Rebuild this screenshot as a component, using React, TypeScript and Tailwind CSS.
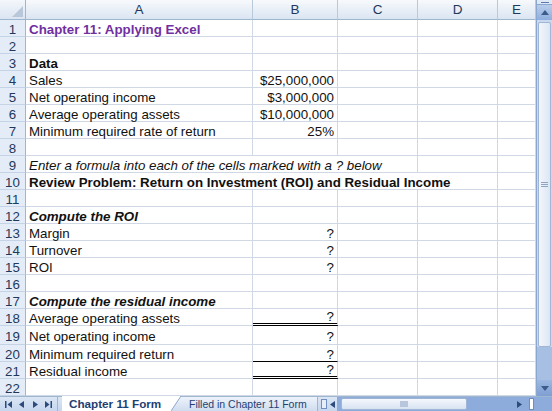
import React from "react";

type Row = {
  n: number;
  a?: string;
  b?: string;
  kind?: "title" | "bold" | "italic" | "bolditalic";
  span?: number;
  h?: number;
  under?: "single" | "double";
};

const COLS = [
  { key: "A", w: 227 },
  { key: "B", w: 85 },
  { key: "C", w: 80 },
  { key: "D", w: 80 },
  { key: "E", w: 38 },
];

const ROWS: Row[] = [
  { n: 1, a: "Chapter 11: Applying Excel", kind: "title" },
  { n: 2 },
  { n: 3, a: "Data", kind: "bold" },
  { n: 4, a: "Sales", b: "$25,000,000" },
  { n: 5, a: "Net operating income", b: "$3,000,000" },
  { n: 6, a: "Average operating assets", b: "$10,000,000" },
  { n: 7, a: "Minimum required rate of return", b: "25%" },
  { n: 8 },
  { n: 9, a: "Enter a formula into each of the cells marked with a ? below", kind: "italic", span: 3 },
  { n: 10, a: "Review Problem: Return on Investment (ROI) and Residual Income", kind: "bold", span: 4 },
  { n: 11 },
  { n: 12, a: "Compute the ROI", kind: "bolditalic" },
  { n: 13, a: "Margin", b: "?" },
  { n: 14, a: "Turnover", b: "?" },
  { n: 15, a: "ROI", b: "?" },
  { n: 16 },
  { n: 17, a: "Compute the residual income", kind: "bolditalic" },
  { n: 18, a: "Average operating assets", b: "?", under: "double" },
  { n: 19, a: "Net operating income", b: "?", h: 19 },
  { n: 20, a: "Minimum required return", b: "?", under: "single" },
  { n: 21, a: "Residual income", b: "?", under: "double" },
  { n: 22 },
];

const textClass = (kind?: Row["kind"]) => {
  switch (kind) {
    case "title":
      return "font-bold text-[#7030a0]";
    case "bold":
      return "font-bold text-[#111]";
    case "italic":
      return "italic text-[#111]";
    case "bolditalic":
      return "font-bold italic text-[#111]";
    default:
      return "text-[#111]";
  }
};

const ColumnHeader = () => (
  <div className="flex h-[20px]">
    <div className="relative w-[26px] shrink-0 border-r border-b border-[#9eb6ce] bg-gradient-to-b from-[#f4f7fb] to-[#dbe4f1]">
      <svg className="absolute right-[2px] bottom-[2px]" width="11" height="11" viewBox="0 0 11 11">
        <path d="M11 0 L11 11 L0 11 Z" fill="#b8c7da" />
      </svg>
    </div>
    {COLS.map((c) => (
      <div
        key={c.key}
        style={{ width: c.w }}
        className="shrink-0 flex items-center justify-center pt-[1px] border-r border-b border-r-[#b9c9dc] border-b-[#9eb6ce] bg-gradient-to-b from-[#f7f9fc] to-[#dbe5f2] text-[13.5px] text-[#1e395b]"
      >
        {c.key}
      </div>
    ))}
  </div>
);

const SheetRow = ({ row }: { row: Row }) => {
  const h = row.h ?? 17;
  const span = row.span ?? 1;
  const aWidth = COLS.slice(0, span).reduce((s, c) => s + c.w, 0);
  const rest = COLS.slice(span === 1 ? 2 : span);
  return (
    <div className="flex" style={{ height: h }}>
      <div className="w-[26px] shrink-0 flex items-center justify-center pt-[3px] border-r border-b border-r-[#9eb6ce] border-b-[#c5d3e6] bg-[#e4ecf7] text-[13.3px] text-[#1e395b]">
        {row.n}
      </div>
      <div
        style={{ width: aWidth }}
        className={`shrink-0 flex items-center pl-[3px] pt-[3px] whitespace-nowrap overflow-visible border-r border-b border-[#d0d7e5] ${textClass(row.kind)}`}
      >
        {row.a}
      </div>
      {span === 1 && (
        <div
          style={{ width: COLS[1].w }}
          className={`shrink-0 flex items-center justify-end pr-[3px] border-r border-[#d0d7e5] text-[#111] ${
            row.under === "double"
              ? "pt-[1px] border-b-[3px] border-b-black border-double"
              : row.under === "single"
              ? "pt-[3px] border-b border-b-black"
              : "pt-[3px] border-b"
          }`}
        >
          {row.b}
        </div>
      )}
      {rest.map((c) => (
        <div
          key={c.key}
          style={{ width: c.w }}
          className="shrink-0 border-r border-b border-[#d0d7e5]"
        />
      ))}
    </div>
  );
};

const VScroll = () => (
  <div className="w-[16px] shrink-0 flex flex-col bg-[#c9d8ee] border-l border-[#8ba6cf]">
    <div className="h-[5px] flex items-center justify-center bg-[#dfe8f5] border-b border-[#8ba6cf]">
      <div className="w-[8px] h-[1px] bg-[#5b7bb0]" />
    </div>
    <div className="h-[15px] flex items-center justify-center bg-gradient-to-b from-[#b8cdea] to-[#8eaede]">
      <svg width="8" height="5" viewBox="0 0 8 5">
        <path d="M0 5 L4 0 L8 5 Z" fill="#3c5a8a" />
      </svg>
    </div>
    <div className="mx-[1px] mt-[2px] h-[325px] rounded-[2px] border border-[#9fb5d6] bg-gradient-to-r from-[#f3f6fb] to-[#dce6f4] flex items-center justify-center">
      <div className="flex flex-col gap-[1px]">
        <div className="w-[7px] h-[1px] bg-[#8ea5c6]" />
        <div className="w-[7px] h-[1px] bg-[#8ea5c6]" />
        <div className="w-[7px] h-[1px] bg-[#8ea5c6]" />
      </div>
    </div>
    <div className="flex-1 bg-[#a7bfe3]" />
    <div className="h-[16px] flex items-center justify-center bg-gradient-to-b from-[#9cb8e2] to-[#7f9fd2]">
      <svg width="8" height="5" viewBox="0 0 8 5">
        <path d="M0 0 L8 0 L4 5 Z" fill="#3c5a8a" />
      </svg>
    </div>
  </div>
);

const Tri = ({ dir, bar }: { dir: "l" | "r"; bar?: boolean }) => (
  <svg width="7" height="7" viewBox="0 0 7 7">
    {dir === "l" ? (
      <>
        {bar && <rect x="0" y="0" width="1.5" height="7" fill="#2d4a7c" />}
        <path d={bar ? "M2.5 3.5 L7 0 L7 7 Z" : "M1 3.5 L6 0 L6 7 Z"} fill="#2d4a7c" />
      </>
    ) : (
      <>
        <path d={bar ? "M0 0 L4.5 3.5 L0 7 Z" : "M1 0 L6 3.5 L1 7 Z"} fill="#2d4a7c" />
        {bar && <rect x="5.5" y="0" width="1.5" height="7" fill="#2d4a7c" />}
      </>
    )}
  </svg>
);

const TabBar = () => (
  <div className="relative h-[15px] flex items-stretch bg-gradient-to-b from-[#dbe6f4] to-[#c5d6ee] border-t border-[#9eb6ce] whitespace-nowrap">
    <div className="w-[58px] flex items-center justify-around px-[2px] border-r border-[#9eb6ce]">
      <Tri dir="l" bar />
      <Tri dir="l" />
      <Tri dir="r" />
      <Tri dir="r" bar />
    </div>
    <div className="relative w-[110px] ml-[4px] -mt-[1px] flex items-center pl-[7px] bg-white font-bold text-[11.7px] text-[#1f3f73] z-10">
      Chapter 11 Form
      <svg className="absolute -right-[9px] top-0" width="10" height="15" viewBox="0 0 10 15">
        <path d="M0 0 L0 15 L10 0 Z" fill="#ffffff" />
        <path d="M0 15 L10 0" stroke="#8ba6cf" strokeWidth="1" />
      </svg>
    </div>
    <div className="relative w-[146px] flex items-center pl-[17px] bg-gradient-to-b from-[#eef3fa] to-[#cfdcef] text-[10.5px] text-[#1f3f73] border-r border-[#9eb6ce]">
      Filled in Chapter 11 Form
    </div>
    <div className="w-[6px] ml-[3px] my-[2px] border border-[#6f8fc0] bg-[#e8eef8]" />
    <div className="w-[10px] flex items-center justify-center">
      <Tri dir="l" />
    </div>
    <div className="flex-1 flex items-center bg-[#8eacdb] pl-[4px]">
      <div className="w-[126px] h-[12px] rounded-[2px] border border-[#9fb5d6] bg-gradient-to-b from-[#f5f8fc] to-[#d7e2f2] flex items-center justify-center">
        <div className="w-[8px] h-[6px] bg-[#b7c6dc]" />
      </div>
      <div className="flex-1" />
      <Tri dir="r" />
      <div className="w-[5px] h-[12px] ml-[6px] mr-[2px] border border-[#6f8fc0] bg-white" />
    </div>
    <div className="w-[16px] bg-[#8eacdb]" />
  </div>
);

export default function App() {
  return (
    <div className="w-[552px] h-[411px] overflow-hidden bg-white font-['Liberation_Sans',Arial,sans-serif] text-[13.33px] leading-none">
      <div className="flex h-[396px]">
        <div className="w-[536px] shrink-0 overflow-hidden">
          <ColumnHeader />
          {ROWS.map((r) => (
            <SheetRow key={r.n} row={r} />
          ))}
        </div>
        <VScroll />
      </div>
      <TabBar />
    </div>
  );
}
